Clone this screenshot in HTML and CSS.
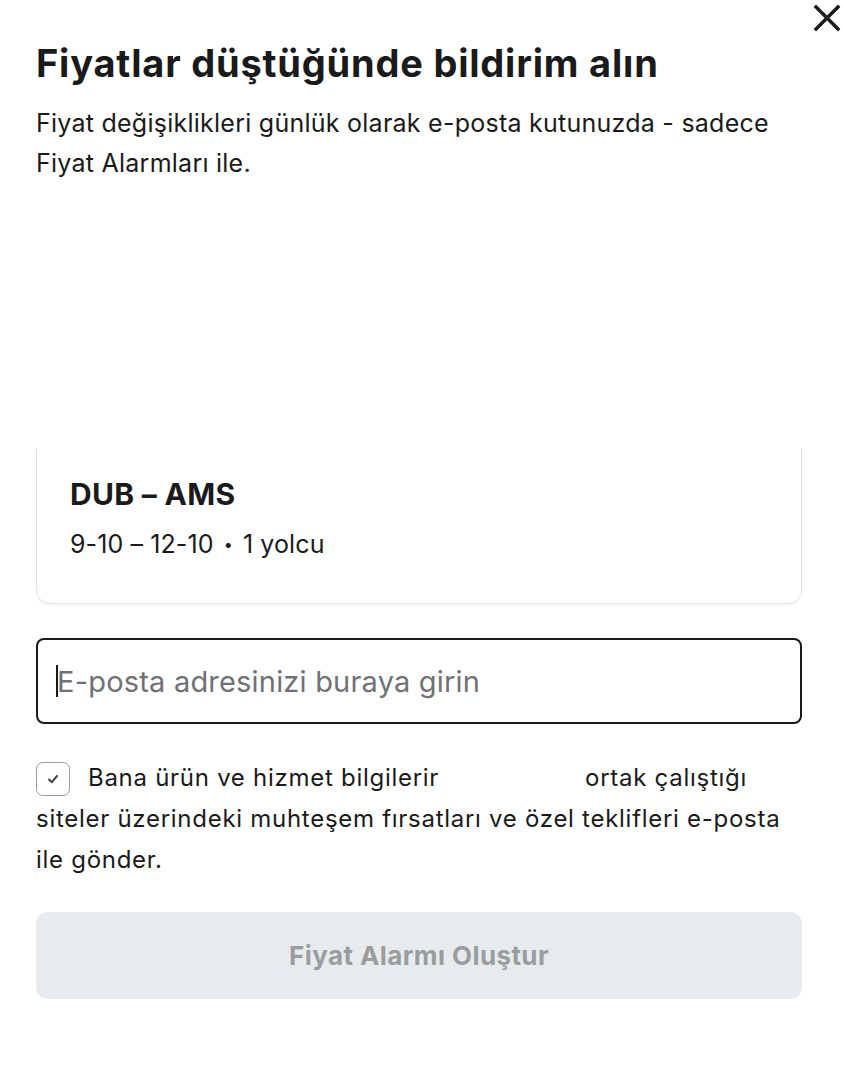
FILE: index.html
```html
<!DOCTYPE html>
<html lang="tr">
<head>
<meta charset="utf-8">
<link rel="stylesheet" href="styles.css">
</head>
<body>
<div class="modal">
  <button class="close" aria-label="Kapat">
    <svg width="28" height="28" viewBox="0 0 28 28"><path d="M3 3L25 25M25 3L3 25" stroke="#1a1a1a" stroke-width="3.4" stroke-linecap="square" fill="none"/></svg>
  </button>
  <h1 class="title">Fiyatlar düştüğünde bildirim alın</h1>
  <p class="subtitle">Fiyat değişiklikleri günlük olarak e-posta kutunuzda - sadece Fiyat Alarmları ile.</p>
  <div class="illustration"></div>
  <div class="card">
    <div class="route">DUB – AMS</div>
    <div class="dates">9-10 – 12-10 <span class="dot">•</span> 1 yolcu</div>
  </div>
  <div class="input"><span class="caret"></span><span class="placeholder">E-posta adresinizi buraya girin</span></div>
  <div class="consent">
    <span class="checkbox">
      <svg width="14" height="14" viewBox="0 0 14 14"><path d="M3 7.5L5.8 10.2L11 4" stroke="#444" stroke-width="2" fill="none" stroke-linecap="round" stroke-linejoin="round"/></svg>
    </span>
    <p class="consent-text">Bana ürün ve hizmet bilgilerir<span class="gap"></span>ortak çalıştığı siteler üzerindeki muhteşem fırsatları ve özel teklifleri e-posta ile gönder.</p>
  </div>
  <button class="submit">Fiyat Alarmı Oluştur</button>
</div>
</body>
</html>
```
FILE: styles.css
```css
html, body {
  margin: 0;
  padding: 0;
  background: #ffffff;
}
body {
  font-family: Inter, "Noto Sans", "Liberation Sans", sans-serif;
  color: #1a1a1a;
}
.modal {
  position: relative;
  width: 843px;
  height: 1073px;
  box-sizing: border-box;
  padding: 40px 41px 0 36px;
}
.close {
  position: absolute;
  top: 3px;
  right: 1px;
  width: 30px;
  height: 30px;
  padding: 0;
  border: none;
  background: none;
  display: flex;
  align-items: center;
  justify-content: center;
}
.title {
  margin: 0;
  font-size: 38px;
  line-height: 46px;
  font-weight: 700;
  letter-spacing: 0.8px;
  color: #1a1a1a;
}
.subtitle {
  margin: 17px 0 0;
  font-size: 25px;
  line-height: 40px;
  font-weight: 400;
  letter-spacing: 0.25px;
  color: #1a1a1a;
}
.illustration {
  height: 265px;
}
.card {
  border: 1.5px solid #e1e4e7;
  border-top: none;
  border-radius: 0 0 14px 14px;
  padding: 28px 33px 44px;
  box-shadow: 0 2px 3px rgba(0,0,0,0.04);
}
.route {
  font-size: 30px;
  line-height: 36px;
  font-weight: 700;
  letter-spacing: 0.3px;
}
.dates {
  margin-top: 17px;
  font-size: 25px;
  line-height: 30px;
  letter-spacing: 0.1px;
}
.dot {
  font-size: 16px;
  margin: 0 3px;
  vertical-align: 3px;
}
.input {
  margin-top: 34px;
  height: 86px;
  box-sizing: border-box;
  border: 2px solid #1a1a1a;
  border-radius: 8px;
  display: flex;
  align-items: center;
  padding-left: 18px;
}
.caret {
  width: 2px;
  height: 32px;
  background: #1a1a1a;
  margin-right: -1px;
}
.placeholder {
  font-size: 29px;
  color: #6f7175;
  letter-spacing: 0.2px;
}
.consent {
  margin-top: 33px;
  position: relative;
}
.checkbox {
  position: absolute;
  left: 0;
  top: 5px;
  width: 34px;
  height: 34px;
  box-sizing: border-box;
  border: 1.5px solid #9a9da1;
  border-radius: 7px;
  display: flex;
  align-items: center;
  justify-content: center;
}
.consent-text {
  margin: 0;
  text-indent: 52px;
  font-size: 24px;
  line-height: 41px;
  letter-spacing: 0.72px;
  color: #1a1a1a;
}
.gap {
  display: inline-block;
  width: 146px;
  height: 1px;
}
.submit {
  margin-top: 32px;
  width: 100%;
  height: 87px;
  border: none;
  border-radius: 12px;
  background: #e8ebee;
  color: #9b9c9e;
  font-family: Inter, "Noto Sans", "Liberation Sans", sans-serif;
  font-size: 26px;
  font-weight: 700;
  letter-spacing: 0.4px;
}
```
